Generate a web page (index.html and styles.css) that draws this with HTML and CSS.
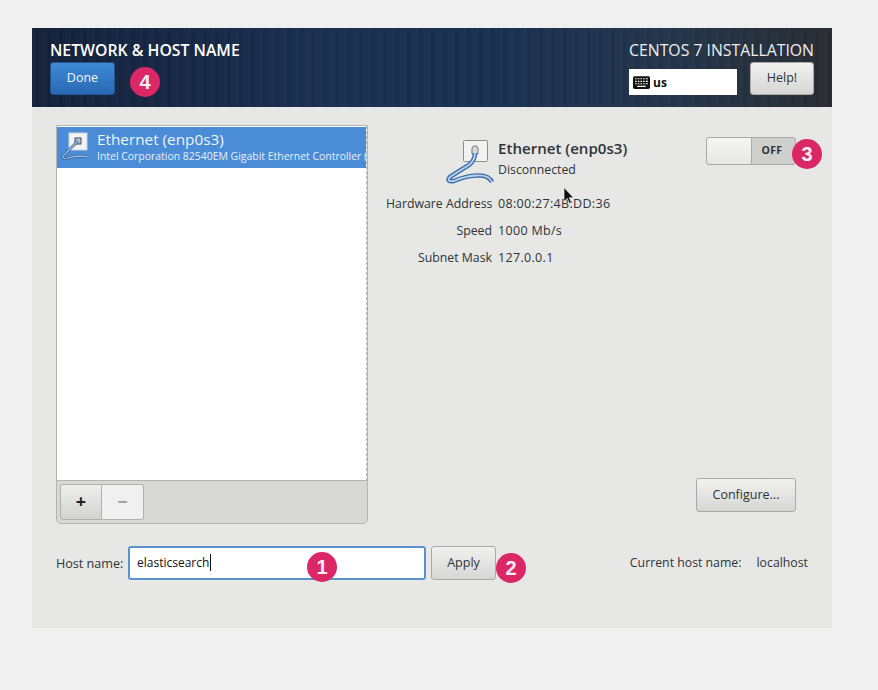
FILE: index.html
```html
<!DOCTYPE html>
<html lang="en">
<head>
<meta charset="utf-8">
<title>Network &amp; Host Name</title>
<link rel="stylesheet" href="styles.css">
</head>
<body>
<div class="window">
  <header class="header">
    <div class="header-left">
      <h1 class="title">NETWORK &amp; HOST NAME</h1>
      <button class="btn-done">Done</button>
    </div>
    <div class="header-right">
      <div class="product">CENTOS 7 INSTALLATION</div>
      <div class="header-controls">
        <div class="layout">
          <svg class="kbd" viewBox="0 0 16 12" width="17" height="13"><rect width="16" height="12" rx="1.5" fill="#111"/><path d="M2 2.500h1.500M4.500 2.500H6M7 2.500h1.500M9.500 2.500H11M12 2.500h2M2 5h1.500M4.500 5H6M7 5h1.500M9.500 5H11M12 5h2M2 7.200h1.500M4.500 7.200H6M7 7.200h1.500M9.500 7.200H11M12 7.200h2M4 9.700h8" stroke="#fff" stroke-width="1.100" fill="none"/></svg>
          <span>us</span>
        </div>
        <button class="btn btn-help">Help!</button>
      </div>
    </div>
  </header>
  <main class="main">
    <div class="columns">
      <section class="devices">
        <div class="list">
          <div class="row-selected">
            <svg class="row-icon" viewBox="0 0 30 30" width="30" height="30">
              <rect x="9" y="1" width="18" height="17" fill="#f4f4f4" stroke="#c8d4e0"/>
              <rect x="15" y="6" width="6" height="6" fill="#bcc6d0" stroke="#3a4a5c"/>
              <path d="M18 9 L3 24 Q2 27 8 26 Q18 23 28 25" fill="none" stroke="#2f5f96" stroke-width="2.600"/>
              <path d="M18 9 L3 24 Q2 27 8 26 Q18 23 28 25" fill="none" stroke="#a8c6e6" stroke-width="1.200"/>
            </svg>
            <div class="row-text">
              <div class="row-name">Ethernet (enp0s3)</div>
              <div class="row-desc">Intel Corporation 82540EM Gigabit Ethernet Controller (</div>
            </div>
          </div>
        </div>
        <div class="toolbar">
          <div class="seg">
            <button class="seg-add">+</button>
            <button class="seg-remove">−</button>
          </div>
        </div>
      </section>
      <section class="details">
        <div class="details-top">
          <div class="summary">
            <svg class="dev-icon" viewBox="0 0 50 46" width="50" height="46">
              <rect x="18.500" y="0.500" width="24" height="21" rx="1" fill="#f2f2f2" stroke="#8e8e8e"/>
              <path d="M27 14v-6l1.500-2h3l1.500 2v6z" fill="#d8d8d8" stroke="#777"/>
              <path d="M30 13 Q30 20 24 25 Q14 31 5 37 Q1 42 9 41 Q20 36 32 35.500 Q44 35 47 42" fill="none" stroke="#3f6fa8" stroke-width="4.600"/>
              <path d="M30 13 Q30 20 24 25 Q14 31 5 37 Q1 42 9 41 Q20 36 32 35.500 Q44 35 47 42" fill="none" stroke="#b9d2ec" stroke-width="1.800"/>
            </svg>
            <div class="summary-text">
              <div class="dev-name">Ethernet (enp0s3)</div>
              <div class="dev-status">Disconnected</div>
            </div>
          </div>
          <div class="switch">
            <div class="switch-knob"></div>
            <div class="switch-label">OFF</div>
          </div>
        </div>
        <dl class="props">
          <dt>Hardware Address</dt><dd>08:00:27:4B:DD:36</dd>
          <dt>Speed</dt><dd>1000 Mb/s</dd>
          <dt>Subnet Mask</dt><dd>127.0.0.1</dd>
        </dl>
        <div class="configure-wrap">
          <button class="btn btn-configure">Configure...</button>
        </div>
      </section>
    </div>
    <div class="host-row">
      <label class="host-label">Host name:</label>
      <div class="host-input">elasticsearch<span class="caret"></span></div>
      <button class="btn btn-apply">Apply</button>
      <div class="current">
        <span>Current host name:</span>
        <span>localhost</span>
      </div>
    </div>
  </main>
</div>
<span class="badge badge-1">1</span>
<span class="badge badge-2">2</span>
<span class="badge badge-3">3</span>
<span class="badge badge-4">4</span>
<svg class="cursor" viewBox="0 0 12 18" width="12" height="18"><path d="M1 0.500v14l3.300-3 2.200 5 2-1-2.200-4.800h4.200z" fill="#111" stroke="#fff" stroke-width="0.600"/></svg>
</body>
</html>
```
FILE: styles.css
```css
* { box-sizing: border-box; }
html, body { margin: 0; height: 690px; overflow: hidden; }
body {
  position: relative;
  background: #f0f0f0;
  padding: 28px 32px;
  font-family: "Open Sans", "Noto Sans", sans-serif;
  font-size: 12.3px;
  color: #2e3436;
}
button { font-family: inherit; }
.window {
  width: 800px;
  height: 600px;
  background: #e7e7e6;
  display: flex;
  flex-direction: column;
}
.header {
  height: 79px;
  padding: 12px 18px 0;
  display: flex;
  justify-content: space-between;
  color: #fff;
  background:
    repeating-linear-gradient(90deg, rgba(255,255,255,0.018) 0 3px, rgba(0,0,0,0.03) 3px 7px, rgba(255,255,255,0.012) 7px 12px),
    linear-gradient(90deg, #13213a 0%, #1a2e50 35%, #1a3052 58%, #24354a 80%, #282c33 100%);
}
.title {
  margin: 0;
  font-size: 15.8px;
  line-height: 20px;
  font-weight: 600;
}
.btn-done {
  display: block;
  margin-top: 2px;
  width: 65px;
  height: 33px;
  padding: 0 0 2px;
  border: 1px solid #20558f;
  border-radius: 3px;
  color: #f2f6fb;
  font-size: 12.5px;
  background: linear-gradient(#3f8ad6, #2868b4);
}
.header-right { display: flex; flex-direction: column; align-items: flex-end; }
.product {
  font-size: 15.8px;
  line-height: 20px;
  color: #eceff2;
}
.header-controls { display: flex; gap: 13px; align-items: flex-start; margin-top: 2px; }
.layout {
  margin-top: 7px;
  width: 108px;
  height: 26px;
  background: #fff;
  color: #111;
  display: flex;
  align-items: center;
  gap: 3px;
  padding-left: 4px;
  font-weight: 700;
  font-size: 12px;
}
.btn {
  border: 1px solid #a9a9a7;
  border-radius: 3px;
  background: linear-gradient(#f1f1f0, #d6d6d4);
  color: #2e3436;
  font-size: 12.5px;
  padding: 0 0 2px;
}
.btn-help { width: 64px; height: 33px; }
.main {
  flex: 1;
  padding: 18px 24px 0;
  display: flex;
  flex-direction: column;
}
.columns { display: flex; height: 399px; }
.devices {
  width: 312px;
  border: 1px solid #b4b4b2;
  border-radius: 0 0 5px 5px;
  display: flex;
  flex-direction: column;
  background: #d8d8d7;
}
.list {
  height: 355px;
  background: #fff;
  border-bottom: 1px solid #b4b4b2;
  border-right: 1px dashed #b9b9b9;
  overflow: hidden;
}
.row-selected {
  height: 41px;
  margin-top: 1px;
  background: #4a8cd6;
  color: #fff;
  display: flex;
  padding: 3px 0 0 3px;
  overflow: hidden;
}
.row-icon { flex: none; margin-top: 2px; }
.row-text { margin-left: 7px; min-width: 0; }
.row-name { font-size: 15.3px; line-height: 19px; color: #eef4fb; white-space: nowrap; }
.row-desc { font-size: 10.45px; line-height: 15px; color: #e6effa; white-space: nowrap; }
.toolbar { flex: 1; padding: 3px 0 0 3px; }
.seg { display: flex; width: 84px; height: 36px; }
.seg button {
  width: 42px;
  height: 36px;
  padding: 0 0 2px;
  border: 1px solid #b0b0ae;
  font-size: 18px;
  line-height: 1;
}
.seg-add {
  border-radius: 3px 0 0 3px;
  background: linear-gradient(#efefee, #d2d2d0);
  color: #222;
  font-weight: 700;
}
.seg-remove {
  border-left: 0 !important;
  border-radius: 0 3px 3px 0;
  background: #f0f0f0;
  color: #9a9a9a;
  font-weight: 700;
}
.details {
  flex: 1;
  padding-left: 18px;
  display: flex;
  flex-direction: column;
}
.details-top { display: flex; justify-content: space-between; height: 64px; padding-top: 12px; }
.summary { display: flex; padding-left: 58px; }
.dev-icon { flex: none; margin-top: 3px; margin-left: 1px; }
.summary-text { margin-left: 3px; padding-top: 1px; }
.dev-name { font-size: 15.1px; font-weight: 600; line-height: 20px; }
.dev-status { font-size: 12.3px; line-height: 18px; margin-top: 3px; }
.switch {
  width: 90px;
  height: 28px;
  border: 1px solid #a9a9a7;
  border-radius: 3px;
  background: #cfcfcd;
  display: flex;
  margin-right: 12px;
}
.switch-knob {
  width: 45px;
  border-right: 1px solid #a9a9a7;
  border-radius: 3px 0 0 3px;
  background: linear-gradient(#f5f5f4, #e6e6e5);
}
.switch-label { flex: 1; text-align: center; font-size: 10.5px; font-weight: 700; line-height: 25px; letter-spacing: 0.3px; padding-right: 3px; }
.props {
  margin: 1px 0 0;
  display: grid;
  grid-template-columns: 106px auto;
  column-gap: 6px;
  grid-auto-rows: 27px;
  align-items: center;
  justify-content: start;
}
.props dt { text-align: right; white-space: nowrap; }
.props dd { margin: 0; white-space: nowrap; font-size: 12.5px; letter-spacing: 0.32px; }
.configure-wrap { flex: 1; display: flex; justify-content: flex-end; align-items: flex-end; padding: 0 12px 12px 0; }
.btn-configure { width: 100px; height: 34px; }
.host-row { display: flex; align-items: center; height: 34px; margin-top: 22px; }
.host-label { width: 72px; white-space: nowrap; font-size: 12.6px; }
.host-input {
  width: 298px;
  height: 34px;
  border: 2px solid #5b93cc;
  border-radius: 3px;
  background: #fff;
  color: #111;
  display: flex;
  align-items: center;
  padding: 0 0 1px 7px;
  font-size: 12px;
}
.caret { width: 1px; height: 17px; background: #111; margin-left: 1px; }
.btn-apply { width: 65px; height: 34px; margin-left: 5px; }
.current { margin-left: auto; display: flex; gap: 15px; padding-bottom: 1px; }
.badge {
  position: absolute;
  width: 30px;
  height: 30px;
  border-radius: 50%;
  background: #dc2766;
  color: #f6f0f2;
  font-family: "Liberation Sans", Arial, sans-serif;
  font-size: 20px;
  font-weight: 700;
  line-height: 30px;
  text-align: center;
}
.badge-1 { left: 307px; top: 552px; }
.badge-2 { left: 496px; top: 553px; }
.badge-3 { left: 792px; top: 139px; }
.badge-4 { left: 130px; top: 67px; }
.cursor { position: absolute; left: 563px; top: 187px; }
```
